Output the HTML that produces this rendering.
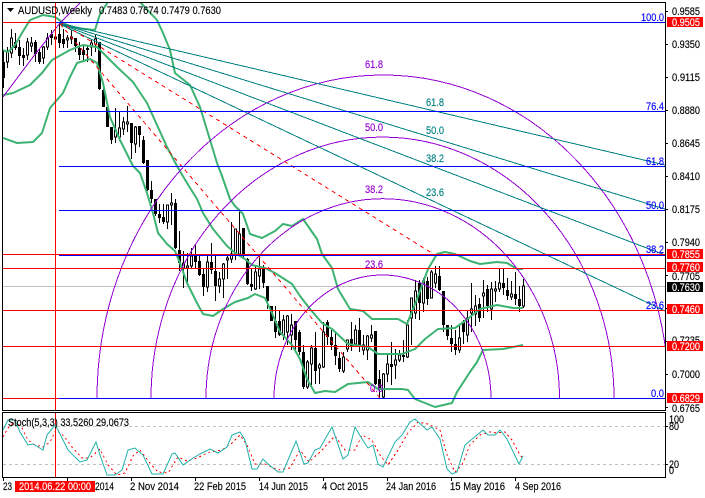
<!DOCTYPE html>
<html><head><meta charset="utf-8"><style>
html,body{margin:0;padding:0;background:#fff;width:705px;height:498px;overflow:hidden}
svg{display:block}
text{font-family:"Liberation Sans",sans-serif;font-size:11px;stroke-width:.15px;stroke:currentColor}
</style></head><body>
<svg width="705" height="498" viewBox="0 0 705 498" xmlns="http://www.w3.org/2000/svg">
<defs>
<clipPath id="m"><rect x="3" y="3" width="662" height="407"/></clipPath>
<clipPath id="s"><rect x="3" y="413" width="662" height="64"/></clipPath>
</defs>
<rect width="705" height="498" fill="#fff"/>
<g clip-path="url(#m)">
<path d="M3 286.500H665" stroke="#c0c0c0" fill="none" shape-rendering="crispEdges"/>
<g shape-rendering="crispEdges" fill="none">
<path stroke="#000" stroke-width="1" d="M3.500 50V88M7.500 47V68M11.500 29V58M15.500 33V50M19.500 40V65M23.500 48V66M27.500 38V60M31.500 37V52M35.500 40V62M39.500 49V64M43.500 46V64M47.500 33V50M51.500 30V45M55.500 30V46M59.500 24V48M63.500 29V48M67.500 35V48M71.500 30V44M75.500 38V52M79.500 42V60M83.500 45V60M87.500 46V62M91.500 40V56M95.500 35V52M99.500 42V90M103.500 88V107M107.500 105V127M111.500 127V144M115.500 108V143M119.500 112V141M123.500 117V135M127.500 106V132M131.500 123V159M135.500 126V153M139.500 126V147M143.500 136V164M147.500 160V191M151.500 181V203M155.500 199V216M159.500 204V223M163.500 204V224M167.500 205V229M171.500 193V225M175.500 199V249M179.500 231V271M183.500 251V288M187.500 253V284M191.500 248V268M195.500 245V269M199.500 256V276M203.500 269V296M207.500 255V292M211.500 243V274M215.500 256V301M219.500 272V293M223.500 263V298M227.500 256V279M231.500 222V263M235.500 229V260M239.500 209V254M243.500 228V259M247.500 258V285M251.500 268V291M255.500 266V290M259.500 255V289M263.500 265V288M267.500 286V309M271.500 306V321M275.500 306V338M279.500 311V336M283.500 315V340M287.500 315V345M291.500 314V350M295.500 321V352M299.500 330V355M303.500 345V389M307.500 360V389M311.500 345V388M315.500 332V384M319.500 363V384M323.500 322V368M327.500 320V345M331.500 330V350M335.500 332V365M339.500 352V372M343.500 352V373M347.500 340V352M351.500 322V351M355.500 325V347M359.500 318V352M363.500 335V355M367.500 335V360M371.500 325V342M375.500 331V385M379.500 370V399M383.500 373V399M387.500 354V382M391.500 342V385M395.500 349V379M399.500 350V362M403.500 340V362M407.500 320V358M411.500 298V345M415.500 280V319M419.500 280V320M423.500 278V312M427.500 277V305M431.500 270V298M435.500 266V288M439.500 266V291M443.500 291V332M447.500 325V340M451.500 325V352M455.500 330V355M459.500 325V353M463.500 320V344M467.500 310V342M471.500 283V332M475.500 295V326M479.500 298V322M483.500 280V318M487.500 285V312M491.500 282V320M495.500 281V302M499.500 269V292M503.500 269V295M507.500 278V300M511.500 281V300M515.500 272V305M519.500 286V312M523.500 279V308"/>
<path stroke="#000" stroke-width="3" d="M3.500 62V78M15.500 42V48M19.500 47V56M23.500 55V58M35.500 42V54M39.500 52V62M51.500 34V38M59.500 34V43M63.500 39V44M75.500 38V46M79.500 48V55M83.500 50V55M87.500 48V50M99.500 42V89M103.500 90V107M107.500 107V127M111.500 127V140M131.500 123V143M139.500 126V135M143.500 140V163M147.500 160V190M151.500 190V199M155.500 199V214M159.500 214V218M163.500 217V222M175.500 203V248M179.500 250V263M195.500 256V262M199.500 261V275M203.500 274V287M211.500 262V270M215.500 271V286M243.500 228V254M247.500 259V284M251.500 284V287M263.500 268V283M267.500 286V301M271.500 306V321M275.500 321V332M279.500 321V335M295.500 321V340M299.500 332V352M303.500 352V387M315.500 348V371M327.500 322V337M331.500 337V345M335.500 345V356M339.500 358V369M351.500 339V347M359.500 330V347M375.500 331V384M379.500 379V390M391.500 364V367M403.500 355V357M419.500 283V303M427.500 281V299M439.500 276V290M443.500 291V325M447.500 325V336M451.500 338V344M455.500 344V350M463.500 322V332M479.500 304V318M487.500 289V306M503.500 283V288M507.500 290V296M515.500 294V299M519.500 299V306"/>
<path stroke="#000" stroke-width="1" fill="#fff" d="M6.500 52h2V62h-2zM10.500 38h2V53h-2zM26.500 42h2V55h-2zM30.500 43h2V46h-2zM42.500 47h2V58h-2zM46.500 38h2V47h-2zM54.500 37h2V39h-2zM66.500 38h2V40h-2zM70.500 37h2V39h-2zM90.500 43h2V47h-2zM94.500 39h2V44h-2zM114.500 130h2V137h-2zM118.500 128h2V137h-2zM122.500 122h2V129h-2zM126.500 122h2V124h-2zM134.500 127h2V144h-2zM166.500 205h2V222h-2zM170.500 203h2V205h-2zM182.500 263h2V268h-2zM186.500 266h2V268h-2zM190.500 256h2V266h-2zM206.500 262h2V287h-2zM218.500 279h2V286h-2zM222.500 264h2V279h-2zM226.500 258h2V260h-2zM230.500 254h2V259h-2zM234.500 229h2V254h-2zM238.500 234h2V254h-2zM254.500 272h2V289h-2zM258.500 269h2V276h-2zM282.500 320h2V335h-2zM286.500 316h2V332h-2zM290.500 325h2V335h-2zM306.500 362h2V387h-2zM310.500 348h2V364h-2zM318.500 365h2V368h-2zM322.500 332h2V367h-2zM342.500 357h2V371h-2zM346.500 340h2V349h-2zM354.500 330h2V344h-2zM362.500 345h2V350h-2zM366.500 336h2V350h-2zM370.500 335h2V338h-2zM382.500 374h2V397h-2zM386.500 364h2V374h-2zM394.500 360h2V365h-2zM398.500 355h2V360h-2zM406.500 325h2V357h-2zM410.500 298h2V318h-2zM414.500 291h2V313h-2zM422.500 281h2V303h-2zM430.500 272h2V298h-2zM434.500 274h2V283h-2zM458.500 338h2V350h-2zM466.500 318h2V335h-2zM470.500 309h2V313h-2zM474.500 306h2V314h-2zM482.500 293h2V296h-2zM490.500 289h2V309h-2zM494.500 289h2V291h-2zM498.500 283h2V289h-2zM510.500 294h2V297h-2zM522.500 286h2V306h-2z"/>
</g>
<g fill="none" stroke="#3cb371" stroke-width="2" stroke-linejoin="round">
<path d="M3 50L8 52L15 45L22 33L30 20L43 15L55 17L65 24L75 28L95 30L100 14L108 2M140 2L157 20L163 33L170 50L175 73L190 85L200 107L207 130L217 163L222 176L230 199L235 206L243 214L250 234L262 238L275 231L283 224L292 226L303 219L317 239L322 254L332 268L338 289L350 309L363 311L372 319L398 319L407 324L417 299L428 269L437 254L445 252L455 254L470 261L480 264L497 262L507 263L517 269L523 269"/>
<path d="M3 95L13 93L30 85L42 73L52 60L70 50L83 45L97 47L100 50L117 67L133 82L147 103L167 147L177 166L187 183L197 199L203 213L213 229L227 246L235 253L245 259L252 265L265 268L275 273L292 284L300 296L310 309L322 323L332 329L348 344L368 347L378 354L402 354L415 349L425 339L438 329L455 328L465 321L480 309L497 305L513 308L523 308"/>
<path d="M3 138L17 143L33 142L42 133L50 108L63 93L70 77L77 63L90 59L97 63L103 83L110 117L120 140L133 166L140 173L147 193L153 213L158 233L167 244L175 251L180 263L187 283L197 303L203 314L213 316L223 309L235 302L248 298L255 294L265 298L272 313L280 332L292 345L300 359L307 379L315 393L325 391L335 392L348 384L368 382L378 389L402 389L408 390L415 399L435 407L452 403L457 392L470 372L477 362L483 350L503 349L523 345"/>
</g>
<g fill="none" stroke="#9400d3" shape-rendering="crispEdges">
<path d="M97 398.500A286 323.500 0 0 1 669 398.500"/>
<path d="M151 398.500A231.500 261.500 0 0 1 614 398.500"/>
<path d="M206 398.500A176.500 199.500 0 0 1 559.500 398.500"/>
<path d="M274 398.500A108.500 123.500 0 0 1 491 398.500"/>
<path d="M3 97L33 57L60 23L80 3"/>
</g>
<g fill="none" stroke="#008080" shape-rendering="crispEdges">
<path d="M60 23.200L665 165"/>
<path d="M60 23.500L665 209"/>
<path d="M60 23.900L665 255"/>
<path d="M60 24.400L665 311"/>
</g>
<g fill="none" stroke="#f00" stroke-dasharray="4 4" shape-rendering="crispEdges">
<path d="M60 22L435 255"/>
<path d="M60 24L380 398"/>
</g>
<g fill="none" stroke="#0000ff" shape-rendering="crispEdges">
<path d="M55 22.500H665M59 111.500H665M59 166.500H665M59 210.500H665M59 255.500H665M59 310.500H665M59 398.500H665"/>
</g>
<g fill="none" stroke="#f00" shape-rendering="crispEdges">
<path d="M3 22.500H55M3 254.500H665M3 268.500H665M3 310.500H665M3 346.500H665M3 398.500H59"/>
<path d="M55.500 3V410"/>
</g>
</g>
<g clip-path="url(#s)">
<path d="M3 426.500H665M3 464.500H665" stroke="#c0c0c0" stroke-dasharray="3 3" fill="none" shape-rendering="crispEdges"/>
<path d="M55.500 413V477" stroke="#f00" fill="none" shape-rendering="crispEdges"/>
<path fill="none" stroke="#f00" stroke-dasharray="2 3" shape-rendering="crispEdges" d="M3 437L8 428L15 421L22 428L28 440L35 445L43 447L50 442L56 430L62 434L72 447L82 458L90 458L100 449L108 465L117 475L125 473L133 456L140 450L150 463L158 472L168 473L178 457L187 461L197 458L210 452L222 450L232 443L240 435L247 445L255 464L265 464L278 470L290 468L300 450L309 462L320 452L335 436L345 450L355 450L362 435L372 440L380 455L388 465L398 450L408 433L418 422L428 424L440 430L447 455L455 472L462 465L470 445L480 435L490 432L497 433L505 432L512 440L520 455L523 458"/>
<path fill="none" stroke="#20b2aa" d="M3 430L8 420L15 420L20 432L28 445L33 444L43 450L47 435L52 429L55 425L58 430L68 450L80 462L87 460L96 442L100 455L107 475L115 475L122 470L128 450L135 448L143 455L152 474L163 474L172 454L175 453L183 465L193 458L200 454L210 449L218 453L227 447L232 435L240 432L245 440L252 469L257 469L263 459L268 464L278 472L283 472L296 441L304 464L308 463L315 450L320 448L332 427L343 459L348 455L355 427L362 439L368 448L373 445L378 464L383 467L395 442L402 435L410 422L415 419L427 430L432 427L440 439L447 469L452 474L457 472L465 445L477 435L483 430L488 435L495 435L500 430L507 439L519 464L523 456"/>
</g>
<path d="M2.500 2.500H665.500V410.500H2.500ZM2.500 412.500H665.500V477.500H2.500Z" fill="none" stroke="#000" shape-rendering="crispEdges"/>
<path d="M665 11.500h3M665 44.500h3M665 77.500h3M665 110.500h3M665 143.500h3M665 176.500h3M665 209.500h3M665 242.500h3M665 275.500h3M665 308.500h3M665 341.500h3M665 374.500h3M665 407.500h3M665 426.500h3M665 464.500h3M3.500 477v4M67.500 477v4M131.500 477v4M195.500 477v4M259.500 477v4M323.500 477v4M387.500 477v4M451.500 477v4M515.500 477v4" stroke="#000" fill="none" shape-rendering="crispEdges"/>
<path d="M7 8h7l-3.500 4z" fill="#000"/>
<text x="18" y="14" fill="#000" color="#000" textLength="74" lengthAdjust="spacingAndGlyphs">AUDUSD,Weekly</text>
<text x="99" y="14" fill="#000" color="#000" textLength="122" lengthAdjust="spacingAndGlyphs">0.7483 0.7674 0.7479 0.7630</text>
<text x="8" y="426" fill="#000" color="#000" textLength="121" lengthAdjust="spacingAndGlyphs">Stoch(5,3,3) 33.5260 29.0673</text>
<g fill="#9400d3" color="#9400d3">
<text x="365" y="68" textLength="18" lengthAdjust="spacingAndGlyphs">61.8</text>
<text x="365" y="131" textLength="18" lengthAdjust="spacingAndGlyphs">50.0</text>
<text x="365" y="193" textLength="18" lengthAdjust="spacingAndGlyphs">38.2</text>
<text x="365" y="268" textLength="18" lengthAdjust="spacingAndGlyphs">23.6</text>
<text x="370" y="392" textLength="13" lengthAdjust="spacingAndGlyphs">0.0</text>
</g>
<g fill="#008080" color="#008080">
<text x="426" y="106" textLength="18" lengthAdjust="spacingAndGlyphs">61.8</text>
<text x="426" y="134" textLength="18" lengthAdjust="spacingAndGlyphs">50.0</text>
<text x="426" y="162" textLength="18" lengthAdjust="spacingAndGlyphs">38.2</text>
<text x="426" y="196" textLength="18" lengthAdjust="spacingAndGlyphs">23.6</text>
</g>
<g fill="#0000ff" color="#0000ff">
<text x="641" y="21" textLength="23" lengthAdjust="spacingAndGlyphs">100.0</text>
<text x="646" y="110" textLength="18" lengthAdjust="spacingAndGlyphs">76.4</text>
<text x="646" y="165" textLength="18" lengthAdjust="spacingAndGlyphs">61.8</text>
<text x="646" y="209" textLength="18" lengthAdjust="spacingAndGlyphs">50.0</text>
<text x="646" y="253" textLength="18" lengthAdjust="spacingAndGlyphs">38.2</text>
<text x="646" y="309" textLength="18" lengthAdjust="spacingAndGlyphs">23.6</text>
<text x="651" y="397" textLength="13" lengthAdjust="spacingAndGlyphs">0.0</text>
</g>
<g fill="#000" color="#000">
<text x="672" y="15" textLength="28" lengthAdjust="spacingAndGlyphs">0.9585</text>
<text x="672" y="48" textLength="28" lengthAdjust="spacingAndGlyphs">0.9350</text>
<text x="672" y="81" textLength="28" lengthAdjust="spacingAndGlyphs">0.9115</text>
<text x="672" y="114" textLength="28" lengthAdjust="spacingAndGlyphs">0.8880</text>
<text x="672" y="147" textLength="28" lengthAdjust="spacingAndGlyphs">0.8645</text>
<text x="672" y="180" textLength="28" lengthAdjust="spacingAndGlyphs">0.8410</text>
<text x="672" y="213" textLength="28" lengthAdjust="spacingAndGlyphs">0.8175</text>
<text x="672" y="246" textLength="28" lengthAdjust="spacingAndGlyphs">0.7940</text>
<text x="672" y="280" textLength="28" lengthAdjust="spacingAndGlyphs">0.7705</text>
<text x="672" y="344" textLength="28" lengthAdjust="spacingAndGlyphs">0.7235</text>
<text x="672" y="378" textLength="28" lengthAdjust="spacingAndGlyphs">0.7000</text>
<text x="672" y="412" textLength="28" lengthAdjust="spacingAndGlyphs">0.6765</text>
<text x="669" y="423" textLength="15" lengthAdjust="spacingAndGlyphs">100</text>
<text x="669" y="430" textLength="10" lengthAdjust="spacingAndGlyphs">80</text>
<text x="669" y="468" textLength="10" lengthAdjust="spacingAndGlyphs">20</text>
<text x="669" y="474" textLength="5" lengthAdjust="spacingAndGlyphs">0</text>
</g>
<g fill="#f00">
<rect x="667" y="17" width="36" height="10"/>
<rect x="667" y="249" width="36" height="10"/>
<rect x="667" y="262" width="36" height="10"/>
<rect x="667" y="304" width="36" height="10"/>
<rect x="667" y="341" width="36" height="10"/>
<rect x="667" y="393" width="36" height="10"/>
</g>
<rect x="667" y="282" width="36" height="10" fill="#000"/>
<g fill="#fff" color="#fff">
<text x="672" y="26" textLength="28" lengthAdjust="spacingAndGlyphs">0.9505</text>
<text x="672" y="258" textLength="28" lengthAdjust="spacingAndGlyphs">0.7855</text>
<text x="672" y="271" textLength="28" lengthAdjust="spacingAndGlyphs">0.7760</text>
<text x="672" y="291" textLength="28" lengthAdjust="spacingAndGlyphs">0.7630</text>
<text x="672" y="313" textLength="28" lengthAdjust="spacingAndGlyphs">0.7460</text>
<text x="672" y="350" textLength="28" lengthAdjust="spacingAndGlyphs">0.7200</text>
<text x="672" y="402" textLength="28" lengthAdjust="spacingAndGlyphs">0.6829</text>
</g>
<g fill="#000" color="#000">
<text x="3" y="490" textLength="9" lengthAdjust="spacingAndGlyphs">23</text>
<text x="95" y="490" textLength="19" lengthAdjust="spacingAndGlyphs">2014</text>
<text x="130" y="490" textLength="49" lengthAdjust="spacingAndGlyphs">2 Nov 2014</text>
<text x="194" y="490" textLength="52" lengthAdjust="spacingAndGlyphs">22 Feb 2015</text>
<text x="259" y="490" textLength="49" lengthAdjust="spacingAndGlyphs">14 Jun 2015</text>
<text x="322" y="490" textLength="46" lengthAdjust="spacingAndGlyphs">4 Oct 2015</text>
<text x="386" y="490" textLength="50" lengthAdjust="spacingAndGlyphs">24 Jan 2016</text>
<text x="450" y="490" textLength="55" lengthAdjust="spacingAndGlyphs">15 May 2016</text>
<text x="515" y="490" textLength="46" lengthAdjust="spacingAndGlyphs">4 Sep 2016</text>
</g>
<rect x="15" y="481" width="80" height="11" fill="#f00"/>
<text x="19" y="490" fill="#fff" color="#fff" textLength="72" lengthAdjust="spacingAndGlyphs">2014.06.22 00:00</text>
</svg>
</body></html>
